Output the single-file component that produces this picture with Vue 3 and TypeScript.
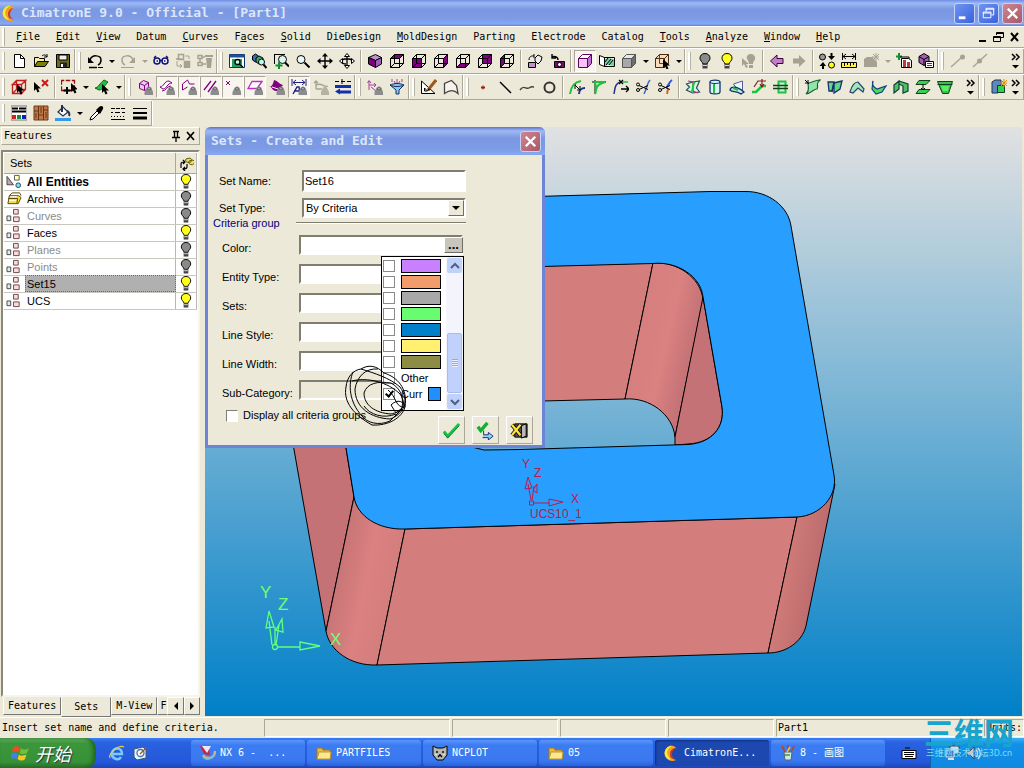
<script setup lang="ts">
import { ref } from 'vue'

type Shape = [d: string, fill: string, stroke?: string, width?: number]

const P = '#800080'
const L = '#c090d0'
const K = '#000'
const N = 'none'
const G = '#a5a294'
const GR = '#20c040'

const front = 'M1.5 5.5h9v9h-9z'
const top = 'M1.5 5.5l4-4h9l-4 4z'
const right = 'M10.5 5.5l4-4v9l-4 4z'
const wire: Shape = [`${front}${top}${right}M5.5 1.5v9h9M5.5 10.5l-4 4`, N, K]
const faceCube = (d: string): Shape[] => [[d, P], wire]
const solidCube = (a: string, b: string, c: string, line: string): Shape[] => [
  [front, a, line], [top, b, line], [right, c, line],
]
const badge: Shape[] = [['M7.500 16v-3l2-4c1-2 4-2 5 0l1.500 4v3z', '#8c8c8c'], ['M10 10l2-1.500 2 1.500-2 1z', '#d0d0d0', '#666']]
const lamp = (c: string): Shape[] => [
  ['M8 .500c-3.500 0-5 2.400-5 4.800 0 2.500 2.500 3.400 3 5.700h4c.5-2.300 3-3.200 3-5.700C13 2.900 11.500.500 8 .500z', c, K],
  ['M5.500 11h5v4.500h-5z', '#444'], ['M6 12.500h4', N, '#ddd'],
]
const glass: Shape[] = [['M10 6.500a4 4 0 1 1-8 0a4 4 0 1 1 8 0z', '#e8f8f8', K], ['M9.500 9.500l5 5', N, K, 2]]
const pointer = (x: number, y: number): Shape => [`M${x} ${y}v9l2-2 1.500 3.500 2-1-1.500-3h3z`, K]
const curve: Shape = ['M1 15C2 7 5 3 12 2', N, GR, 2]
const scissors: Shape[] = [
  ['M1.500 5.500a1.500 1.500 0 1 0 3 0a1.500 1.500 0 1 0-3 0M1.500 11a1.500 1.500 0 1 0 3 0a1.500 1.500 0 1 0-3 0M4 6.500l9 4M4 10.500l9-4', N, K],
]

const icons: Record<string, Shape[]> = {
  new: [['M3.500 1.500h6l4 4v9h-10z', '#fff', K], ['M9.500 1.500v4h4', N, K]],
  open: [['M1.500 13.500v-9h4l1 1h5v3', '#f5f0a0', K], ['M1.500 13.500l3-5h11l-3.500 5z', '#808000', K], ['M9 3c2-2 4-1 5 1m0-3v3h-3', N, K]],
  save: [['M1.500 1.500h13v13h-13z', '#6b6b1a', K], ['M4 2h8v5H4z', '#eee', K], ['M5 9.500h7v5H5z', '#222'], ['M6 11h2v3H6z', '#fff']],
  undo: [['M3 7c2-6 11-5 11 0 0 3-1 4-3 5', N, K, 1.5], ['M1 4v6h6z', K], ['M2 14.500h8', N, K, 1.5], ['M11 14.500h5', N, K, 1]],
  redo: [['M13 7c-2-6-11-5-11 0 0 3 1 4 3 5', N, G, 1.5], ['M15 4v6H9z', G], ['M1 14.500h13', N, G]],
  goggles: [
    ['M1.500 5h13v6H9L8 9.500 7 11H1.500z', '#dfe6ff'],
    ['M1 8a3 3 0 1 0 6 0a3 3 0 1 0-6 0M9 8a3 3 0 1 0 6 0a3 3 0 1 0-6 0M7 7.500h2', '#eef2ff', '#101070', 1.5],
    ['M3.500 8h1.500M11 8h1.500M1 5l2-2M15 5l-2-2', N, '#101070', 1.500],
  ],
  layout: [['M3.500 1.500h5v5h-5zM1 6h5v1M9.500 8.500h5v5h-5z', N, G, 1.5], ['M9 9h6v6H9z', G], ['M2 8v5h5m-2-2l2 2-2 2M10 3h4v3', N, G]],
  tree: [['M1 2.500h4v3H1zM1 9.500h4v3H1zM3 5.500v4M5 4h3M5 11h4', N, G, 1.5], ['M8 2h8v2H8zM9 5h6l-1 10h-4z', G]],
  viewwin: [['M.5 1.500h15v13H.500z', '#fff', '#103070'], ['M.5 1.500h15v3H.500z', '#205090'], ['M3 6h10v8H3z', '#20a060'], ['M11 9a2.500 2.500 0 1 1-5 0a2.500 2.500 0 1 1 5 0M10 11l4 3', '#c8ffe0', K, 1.3]],
  zoomcubes: [['M1.500 3l3-2 3 2v4l-3 2-3-2z', '#3a6ea8', K], ['M5 5l3-2 4 2v4l-4 2-3-2z', '#37b25f', K], ['M13.500 9a3 3 0 1 1-6 0a3 3 0 1 1 6 0', '#c4f5f6', K], ['M12.500 11.500l3 3.500', N, K, 2]],
  zoomrect: [['M1 1.500h11M1.500 1v10', N, K, 1], ['M13.500 6.500a4 4 0 1 1-8 0a4 4 0 1 1 8 0', '#d8f5f0', K], ['M12 9.500l4 4', N, K, 2], ['M6 9v7M2.500 12.500h7', N, '#109030', 2]],
  zoom: glass,
  pan: [['M8 2v12M2 8h12', N, K, 1.4], ['M8 0l3 3.500H5zM8 16l3-3.500H5zM0 8l3.500-3v6zM16 8l-3.500-3v6z', K]],
  rotate: [['M8 2v12M3 8c0-3 10-3 10 0M2 8c1 3 4 3 5 3', N, K, 1.3], ['M8 .500l2.500 3h-5zM8 15.500l2.500-3h-5zM.500 8l3-2.500v5zM15.500 8l-3-2.500v5z', '#fff', K]],
  iso: [['M1.500 4.500l7-3 6 3-6 3z', L, K], ['M1.500 4.500l7 3v7l-7-3.500z', P, K], ['M14.500 4.500l-6 3v7l6-3.500z', '#9a60b8', K]],
  topface: faceCube(top), frontface: faceCube(front), rightface: faceCube(right),
  bottomface: faceCube('M1.500 14.500l4-4h9l-4 4z'), backface: faceCube('M5.500 1.500h9v9h-9z'), leftface: faceCube('M1.500 5.500l4-4v9l-4 4z'),
  restore: [['M1.500 9.500h7v5h-7z', L, K], ['M2 7c0-5 5-4 5-4m0-2v4M8 5l3-3 4 2-1 4-3 3-3-3z', '#eee', K]],
  camera: [['M5.500 8.500h10v6h-10z', P, K], ['M12.500 11.500a2 2 0 1 1-4 0a2 2 0 1 1 4 0', '#fff', K], ['M9 7c0-4-5-4-6-3m0-3v4h4', N, K, 1.4]],
  shaded: solidCube('#f4c4f4', '#fff', '#c070d0', '#600060'),
  section: [['M.500 2.500l5 2v9l-5-2zM5.500 4.500h10v9h-10z', '#fff', K], ['M6 6l3-1 6 1v7l-6-1-3 1z', '#70d0a0'], ['M7 12l5-6M10 12l4-5M6 9l3-4', N, K]],
  graybox: solidCube('#a8a8a8', '#e8e8e8', '#6e6e6e', '#555'),
  pickbox: [[`${front}${top}${right}`, '#f5dcbc', '#4b2a10'], ['M5.500 1.500v9h9', N, '#6b3a10'], pointer(9, 6)],
  lampoff: lamp('#8a8a8a'), lampon: lamp('#ffff20'),
  lamppick: [['M10 1c-3 0-5 2-4 5 1 2 2 3 2 5h4c0-3 3-4 2-7-1-2-2-3-4-3z', G], ['M1 5v8l2-2 2 4 2-1-2-3h3zM8 12h4v3H8z', G]],
  prev: [['M1.500 8L8 2v3.500h6v5H8V14z', '#c080c8', '#400040']],
  next: [['M14.500 8L8 2v3.500H2v5h6V14z', G]],
  swap: [['M6.500 4a3 3 0 1 1-6 0a3 3 0 1 1 6 0', '#999', K], ['M15.500 12a3 3 0 1 1-6 0a3 3 0 1 1 6 0', '#ffff20', K], ['M11.500 0h2v3h2.500L12.500 7 9 3h2.500zM3 16v-3H.500L4 9l3 4H5v3z', K]],
  measure: [['M1.500 0v7M14.500 0v7M2 3.500h12M5 1L2 3.500 5 6M11 1l3 2.500L11 6', N, K], ['M.5 9.500h15v5H.500z', '#ffef50', K], ['M3.500 10v3M6.500 10v2M9.500 10v3M12.500 10v2', N, K]],
  burst: [['M1 6l3-2h6v10H1zM10 5l4 4v5h-4z', G], ['M13 0v8M9 4h7M10 1l6 6M16 1l-6 6', N, G]],
  doc: [['M3 0v7M0 3.500h6', N, '#109030', 2], ['M4 4h9v2', N, K], ['M5.500 5.500h7l3 2v7h-10z', '#fff', K], ['M7 7h3v7H7zM11 9h3v5h-3z', '#b04030']],
  props: [['M1 3.500l5-3 5 3v6l-5 3-5-3z', '#a060b0', K], ['M1 3.500l5 3 5-3M6 6.500v6', N, K], ['M7.500 8.500h8v6h-8z', '#fff', K], ['M9 10.500h5M9 12.500h5', N, '#444']],
  lineend: [['M1 14L11 5', N, G, 1.3], ['M15 4a2.500 2.500 0 1 1-5 0a2.500 2.500 0 1 1 5 0', G]],
  linemid: [['M1 14L15 1', N, G, 1.3], ['M10 8a2.500 2.500 0 1 1-5 0a2.500 2.500 0 1 1 5 0', G]],
  pickcube: [[`${front}${top}${right}M5.500 1.500v9h9M1.500 14.500l4-4`, N, '#c02020', 1.3], pointer(6, 5)],
  deselect: [pointer(1, 3), ['M9 1l6 6M15 1l-6 6', N, '#d01818', 2]],
  boxselect: [['M.500 1.500h13v10H.500z', N, '#901010', 1.3], ['M4 0v3M10 0v3M0 6.500h2M12 5.500h3', N, '#ece9d8', 1.5], ['M6 8v7M2.500 11.500h7', N, K, 2], pointer(10, 4)],
  pickface: [['M1 9c3 0 5-5 9-8l4 2c-3 3-5 8-9 8z', GR, '#106020'], pointer(8, 5)],
  hidecube: [['M2.500 4.500l4-3 5 2v6l-4 2-5-2z', '#f0c8f0', P], ['M2.500 4.500l5 2 4-3M7.500 6.500v5', N, P], ...badge],
  hideface: [['M1 8c4 0 4-6 9-6l3 2c-5 0-5 6-9 6z', '#fff', P], ['M3 12c4 0 5-5 9-5', N, P], ...badge],
  hideopen: [['M1.500 11V5l5-4 2 4 5 0M1.500 11l5-3', N, P], ...badge],
  hidecurve: [['M1 11L8 2M5 13l8-11', N, P, 1.3], ...badge],
  hidepoint: [['M1 2l4 4M5 2L1 6', N, P], ...badge],
  hideplane: [['M5 2.500h10l-5 7H1z', '#fff', '#c030c0', 1.3], ...badge],
  hidesolid: [['M0 8c3 0 4-3 5-7 4 1 5 4 9 5l-4 5c-3 2-6 1-8-3z', P], ['M3 8l6 2', N, '#fff'], ...badge],
  hidedim: [['M1 0v7M15 0v7M2 3.500h12M5 1L2 3.500 5 6M11 1l3 2.500L11 6', N, '#202080'], ['M2 15L6 8h2l1 7M3 12h6', N, '#202080', 1.4], ...badge],
  hideucs: [['M3 10V2M1 4l2-2 2 2M3 10h6M3 6c6-3 8 3 12 1', N, G, 1.3], ['M8 16v-3l2-4c1-2 3-2 4 0l2 4v3z', '#b5b2a4']],
  hidebars: [['M0 2.500h4m2 0h4m2 0h4M7 0v5', N, K], ['M0 6h16v3H0zM0 12.500l5-3v2h11v3H5v1z', '#1030b0']],
  axesfilter: [['M2 11V2M.500 4L2 1.500 4 4M2 6h7M7 4l2 2-2 2M4 8l5 4', N, '#a040a0'], ...badge],
  funnel: [['M3 0v3M8 0v4M13 0v3M5 2l2 3M11 2L9 5', N, '#a040a0'], ['M1 6c4-2 10-2 14 0l-5 5v4H7v-4z', '#8cc8f0', '#103060'], ['M1 6c4 2 10 2 14 0', N, '#103060']],
  sketch: [['M.500 2v12.500H14z', '#fff', K], ['M3.500 9v3h3z', N, K], ['M15 1L7 11', N, '#a05818', 3], ['M8 9l-2 3 3-1z', K]],
  profile: [['M1.500 14.500V4.500l7-3 5 5 1.500 8c-4-4-8-4-13.500 0z', '#f6f4ea', '#444', 1.3]],
  point: [['M6.500 7L9.500 10M9.500 7L6.500 10M8 6.500v4M6 8.500h4', N, '#a02010']],
  line: [['M3 3l11 11', N, K, 1.5]],
  spline: [['M1 11c4-6 6 0 9-2s4-1 5-1', N, '#444', 1.5]],
  circle: [['M13.500 8.500a5 5 0 1 1-10 0a5 5 0 1 1 10 0', N, '#333', 2]],
  offset: [curve, ['M10 15c0-3 2-6 6-6', N, '#203090', 2], ['M6 6l5 5m-4-5h-1v4M11 7v4H8', N, K]],
  corner: [['M1 3h14M4 1v14', N, K, 1], ['M3 3h11M4 3c1 6 2 8 0 12M5 11c1-5 3-6 9-8', N, GR, 2]],
  extend: [['M1 15C2 9 2 4 8 3', N, '#203090', 1.5], ['M6 3h9', N, GR, 1.5], ['M6 1l4 4M10 1L6 5M8 10h8M13 7l3 3-3 3', N, K, 1.3]],
  trim: [['M15 1c-3 3-3 8-6 14', N, '#4060d0', 1.5], ...scissors],
  split: [['M15 1c-3 2-3 5-6 8', N, '#3050e0', 2], ['M11 10l-1 5', N, '#e06020', 2], ...scissors],
  facecut: [['M1.500 5l6-2 7-1-3 7 3 4-7 1-6-3 3-3z', '#d5f8e2', '#205050', 1.2], ['M3 2l5 1v9l5 2', N, '#c020a0', 1.2], ['M10 3c-4 3 0 7-4 10', N, GR, 2]],
  tube: [['M3 3c0-2.500 10-2.500 10 0v10c0 2.500-10 2.500-10 0z', '#d8f4f4', '#103070', 1.3], ['M7 5v9', N, GR, 2], ['M3 3c0 2 10 2 10 0', N, '#103070']],
  wrap: [['M4.500 5l9-3v9l-4 1z', '#e8f6ff', '#506090'], ['M1 11c1-4 7-4 14 2l-3 2C7 11 4 14 1 11z', '#c8f0e8', '#103070', 1.3], ['M4 9l5 2', N, GR, 2]],
  step: [['M1 13h4L11 7h4', N, GR, 2.5], ['M3 8L7 2h8M11 0v7M9 5l2 3 2-3', N, '#802020', 1.2]],
  cross: [['M5.500 2.500h7v11h-7z', '#c8f0d0', GR, 2], ['M0 6.500h15M0 9.500h15', N, '#104020', 1.4]],
  blend: [['M3 4c4 0 6-3 12-3-5 4-1 6-3 9-4 0-5 4-11 5 4-3 2-7 2-11z', '#90e8a8', '#206040', 1.2], ['M0 1l4 4M3 1v3H0', N, K]],
  sweep: [['M1 3h6l-2 9H2zM7 4l8-2-2 8-6 4z', '#60d880', '#183070', 1.3], ['M7 4l-2 9', N, '#183070', 1.3]],
  arch: [['M1 13C3 6 5 3 9 3l6 7-1 3-5-4-5 5z', '#a0e8b8', '#304070', 1.2]],
  fold: [['M2 2c-2 5 2 7 4 8l9-3-4 6-6 2-4-5z', '#50d860', '#104080', 1.2]],
  shell: [['M1 6l5-4v8l-5 4zM6 2l9 3v7l-5 2V7L6 5z', '#50c060', '#104040', 1.2]],
  extrude: [['M4 1.500h11l-4 4H1z', '#38d050', '#104020'], ['M4 10.500h11l-4 4H1z', '#38d050', '#104020'], ['M8 5v6M6 9l2 2 2-2', N, K]],
  draft: [['M.5 2.500h15l-4 12h-6z', '#38c050', '#104020'], ['M.5 5.500h15', N, '#104020'], ['M4 7h8l-1 5H6z', '#58ef60']],
  newsolid: [['M1 3l3-2h6v10l-3 3H1z', '#6088c0', '#203050'], ['M6.500 6.500h7v7h-7z', '#30d050', '#104020'], ['M13 0v8M9 4h7M10 1l6 6M16 1l-6 6', N, '#e09010']],
  colors: [['M0 1h16v14H0z', '#fff', '#777'], ['M1 3.500h6M8 3.500h7M1 6.500h14', N, K, 2], ['M1 10h4v4H1z', '#d02020'], ['M6 10h4v4H6z', '#109030'], ['M11 10h4v4h-4z', '#1020c0']],
  wood: [['M1 1h14v14H1z', '#c07848', '#6a3a1a'], ['M5.500 1v14M10.500 1v14M1 6h4M6 10h4M11 5h4M3 8v5M8 2v6M13 7v6', N, '#6a3416']],
  bucket: [['M3 7l5-5 5 5-5 4z', '#fff', '#203050', 1.2], ['M7 0v7M12 6c2 1 3 3 2 5', N, '#203050', 2], ['M0 13h16v3H0z', '#3399e8']],
  dropper: [['M2 15l1-3 6-6 2 2-6 6z', '#fff', K], ['M8 5l4 4 3-5c1-3-2-4-4-2z', K]],
  dashes: [['M1 3.500h4m1 0h4m1 0h4M1 7.500h2m2 0h5m2 0h3M1 11.500h1m2 0h1m2 0h1m2 0h1m2 0h1M1 14.500h14', N, K]],
  widths: [['M1 3.500h14', N, K, 1], ['M1 8h14', N, K, 2], ['M1 13h14', N, K, 3]],
  all: [['M.5 11.500V2.500l7 9z', '#c8a0a8', '#444'], ['M8.500 1.500h5v5h-5z', '#ffffc0', '#555'], ['M15 12a2.500 2.500 0 1 1-5 0a2.500 2.500 0 1 1 5 0', '#80e0e0', '#246']],
  archive: [['M1.500 13.500L3 5h10l2.500 2-3 6.500z', '#f5e040', '#554400'], ['M3 5l3-3h8l1.500 3M2 8h10l-1 5', N, '#554400'], ['M4 6h7M3 10h7', N, '#fff']],
  set: [['M.5 8.500h4v5h-4z', '#e8e8e8', '#444'], ['M7.500 1.500h5v5h-5zM7.500 9.500h6v5h-6z', '#ffd8dc', '#664448']],
  logo: [['M10 1C3 0-1 6 1 11c2 5 8 6 11 4-4-1-6-3-6-6s2-5 6-6z', '#f5a020'], ['M9 1C4 2 2 7 4 11l3 4C2 14 0 10 1 6c1-3 4-6 8-5z', '#f4ee38'], ['M11 3C6 4 5 9 7 13l5 2c-4-2-6-7-1-12z', '#d83818']],
  ie: [['M3 9h10c0-7-9-7-10-1-1 6 7 8 9 4', N, '#7cc8ff', 2.5], ['M1 13C-1 9 10-1 15 2', N, '#e8d050', 1.2]],
  desk: [['M2 4l9-2 3 3v8l-9 2-3-3z', '#e8f2ff', '#456'], ['M12 8a3.500 3.500 0 1 1-7 0a3.500 3.500 0 1 1 7 0', '#fff', '#3878b8', 1.3], ['M8 9l6-6', N, '#a06020', 1.5]],
  nx: [['M0 1l8 1 2 8-6-1z', '#d02040'], ['M2 1l5 7 4-7z', '#e8e8ff'], ['M3 10c3 5 12 4 12-4', N, '#d8b070', 2.5], ['M3 12c3 4 10 2 11-3', N, '#68c0e0', 1.5]],
  folder: [['M1 3h5l1 2h7v9H1z', '#e8b840', '#a07818'], ['M3 7h12l-1 7H1z', '#ffe890', '#c09830']],
  cat: [['M1 1l4 2h6l4-2v9l-4 5H5l-4-5z', '#b8b8b0', K], ['M5 6v2M11 6v2M6 12l2-2 2 2M8 9v2', N, K, 1.4], ['M3 9l2 1M13 9l-2 1', N, '#eee']],
  paint: [['M4 7h8l-1 8H5z', '#d8e8d8', '#567'], ['M5 7L2 1M8 7V0M11 7l3-6', N, '#c04020', 1.6], ['M7 7l3-5', N, '#e8c020', 1.6], ['M5 10h5', N, '#30a040', 1.5]],
  keyboard: [['M1 5.500h14v8H1z', '#fff', K], ['M3 7.500h10M3 9.500h10', N, K, 1], ['M4 11.500h8M4 3h5', N, K]],
  monitor: [['M5 1h9v8H5z', '#c8e0f8', '#345'], ['M1 5h8v7H1z', '#3070c8', '#dde'], ['M3 14h6', N, '#dde', 2]],
  sound: [['M2 6h3l4-4v12l-4-4H2z', '#c8c8d0', '#445'], ['M11 5c2 2 2 5 0 7M13 3c3 3 3 8 0 11', N, '#dde', 1.3]],
}

interface Tool { icon: string; drop?: boolean; on?: boolean }
const parse = (row: string[]): Tool[][] =>
  row.map(group => group.split(' ').map(word => ({
    icon: word.replace(/[+*]/g, ''), drop: word.includes('+'), on: word.includes('*'),
  })))

const toolRows = [
  parse([
    'new open save',
    'undo+ redo+ goggles layout tree',
    'viewwin zoomcubes zoomrect zoom pan rotate | iso topface frontface rightface bottomface backface leftface | restore camera | shaded* section graybox+ pickbox+',
    'lampoff lampon lamppick | prev next | swap measure burst+ doc props',
    'lineend linemid more',
  ]),
  parse([
    'pickcube deselect | boxselect+ pickface+',
    'hidecube hideface* hideopen* hidecurve* hidepoint* hideplane* hidesolid hidedim* hideucs hidebars',
    'axesfilter funnel',
    'sketch profile',
    'point line spline circle | offset corner extend trim split | facecut tube wrap step cross',
    'blend sweep arch fold shell extrude draft more',
    'newsolid more',
  ]),
  parse(['colors wood bucket+ dropper dashes widths']),
]

const menus: [string, string, string][] = [
  ['', 'F', 'ile'], ['', 'E', 'dit'], ['', 'V', 'iew'], ['Datum', '', ''], ['', 'C', 'urves'], ['F', 'a', 'ces'],
  ['', 'S', 'olid'], ['DieDesign', '', ''], ['', 'M', 'oldDesign'], ['Parting', '', ''], ['Electrode', '', ''],
  ['Catalog', '', ''], ['', 'T', 'ools'], ['', 'A', 'nalyze'], ['', 'W', 'indow'], ['', 'H', 'elp'],
]

const sets = [
  { name: 'All Entities', icon: 'all', lit: true, look: 'strong' },
  { name: 'Archive', icon: 'archive', lit: false, look: '' },
  { name: 'Curves', icon: 'set', lit: false, look: 'dim' },
  { name: 'Faces', icon: 'set', lit: true, look: '' },
  { name: 'Planes', icon: 'set', lit: false, look: 'dim' },
  { name: 'Points', icon: 'set', lit: false, look: 'dim' },
  { name: 'Set15', icon: 'set', lit: true, look: 'chosen' },
  { name: 'UCS', icon: 'set', lit: true, look: '' },
]

const setName = ref('Set16')
const criteria = ['Color', 'Entity Type', 'Sets', 'Line Style', 'Line Width', 'Sub-Category']
const swatches = ['#c880ff', '#f09c6c', '#a8a8a8', '#68fc70', '#0080c8', '#fff070', '#8c8c44']

const tasks = [
  { icon: 'nx', text: 'NX 6 -  ...' },
  { icon: 'folder', text: 'PARTFILES' },
  { icon: 'cat', text: 'NCPLOT' },
  { icon: 'folder', text: '05' },
  { icon: 'logo', text: 'CimatronE...', active: true },
  { icon: 'paint', text: '8 - 画图' },
]
</script>

<template>
  <div class="screen">
    <header class="titlebar">
      <svg class="ico" viewBox="0 0 16 16"><path v-for="(s, i) in icons.logo" :key="i" :d="s[0]" :fill="s[1]" /></svg>
      <h1>CimatronE 9.0 - Official - [Part1]</h1>
      <button class="win" aria-label="Minimize"><svg viewBox="0 0 20 20"><path d="M4 13h7v3H4z" fill="#fff" /></svg></button>
      <button class="win" aria-label="Restore"><svg viewBox="0 0 20 20"><path d="M7.500 8V4.500h8v7H13M4.500 8.500h8v6h-8zM4 9.500h9M7 5.500h9" fill="none" stroke="#fff" /></svg></button>
      <button class="win shut" aria-label="Close"><svg viewBox="0 0 20 20"><path d="M5 5l10 10M15 5L5 15" stroke="#fff" stroke-width="2.500" /></svg></button>
    </header>

    <nav class="menubar">
      <i class="grip"></i>
      <button v-for="m in menus" :key="m.join('')">{{ m[0] }}<u>{{ m[1] }}</u>{{ m[2] }}</button>
      <svg class="mdi" viewBox="0 0 42 12" aria-hidden="true">
        <path d="M1 9h7v2H1z" /><path d="M18.500 4V1.500h7v5H23M15.500 5.500h7v5h-7zM15 6.500h8M18 2.500h8" fill="none" stroke="#000" />
        <path d="M33 2l7 8M40 2l-7 8" stroke="#000" stroke-width="2" />
      </svg>
    </nav>

    <div v-for="(row, r) in toolRows" :key="r" class="toolrow" :class="{ short: r === 2 }">
      <div v-for="(group, g) in row" :key="g" class="group">
        <i class="grip"></i>
        <template v-for="(t, k) in group" :key="k">
          <i v-if="t.icon === '|'" class="sep"></i>
          <button v-else-if="t.icon === 'more'" class="more" aria-label="More buttons">
            <svg viewBox="0 0 12 20"><path d="M2 3l3 3-3 3M6 3l3 3-3 3" fill="none" stroke="#000" stroke-width="1.500" /><path d="M2 14h7l-3.500 3.500z" /></svg>
          </button>
          <template v-else>
            <button class="tool" :class="{ on: t.on }" :aria-label="t.icon">
              <svg class="ico" viewBox="0 0 16 16">
                <path v-for="(s, i) in icons[t.icon]" :key="i" :d="s[0]" :fill="s[1]" :stroke="s[2]" :stroke-width="s[3]" />
              </svg>
            </button>
            <button v-if="t.drop" class="drop" :class="{ off: t.icon === 'redo' || t.icon === 'burst' }" :aria-label="t.icon + ' options'"></button>
          </template>
        </template>
      </div>
    </div>

    <main class="work">
      <aside class="side">
        <div class="sidehead">
          <span>Features</span>
          <svg viewBox="0 0 26 12" aria-hidden="true"><path d="M2 1.500h6M3.500 1v6M6.500 1v6M1 7.500h8M5 8v4" fill="none" stroke="#000" stroke-width="1.300" /><path d="M16 2l7 8M23 2l-7 8" stroke="#000" stroke-width="1.700" /></svg>
        </div>
        <div class="sidebody">
          <table>
            <colgroup><col class="ckind"><col><col class="cvis"></colgroup>
            <thead>
              <tr>
                <th colspan="2">Sets</th>
                <th class="vis">
                  <svg class="ico" viewBox="0 0 16 16"><path d="M3 13V9c0-2 2-2 4-2M5 5l2 2-2 2M9 9v3c0 2-2 2-4 2M7 12l-2 2 2 2" fill="none" stroke="#000" stroke-width="1.200" /><path d="M12 3a3 2.500 0 1 1-4 1zM15 5a3 2.500 0 1 1-4 1z" fill="#e8e060" stroke="#665c10" /></svg>
                </th>
              </tr>
            </thead>
            <tbody>
              <tr v-for="s in sets" :key="s.name">
                <td class="kind"><svg class="ico" viewBox="0 0 16 16"><path v-for="(p, i) in icons[s.icon]" :key="i" :d="p[0]" :fill="p[1]" :stroke="p[2]" /></svg></td>
                <td class="name" :class="s.look">{{ s.name }}</td>
                <td class="vis"><svg class="ico" viewBox="0 0 16 16"><path v-for="(p, i) in icons[s.lit ? 'lampon' : 'lampoff']" :key="i" :d="p[0]" :fill="p[1]" :stroke="p[2]" /></svg></td>
              </tr>
            </tbody>
          </table>
        </div>
        <div class="tabs">
          <button>Features</button>
          <button class="current">Sets</button>
          <button>M-View</button>
          <button class="cut">F</button>
          <button class="arrow" aria-label="Scroll left"><svg viewBox="0 0 8 8"><path d="M6 0v8L2 4z" /></svg></button>
          <button class="arrow" aria-label="Scroll right"><svg viewBox="0 0 8 8"><path d="M2 0v8l4-4z" /></svg></button>
        </div>
      </aside>

      <section class="view">
        <svg class="scene" viewBox="205 127 817 590" preserveAspectRatio="xMinYMin slice">
          <defs>
            <linearGradient id="roundLeft" gradientUnits="userSpaceOnUse" x1="338" y1="570" x2="396" y2="582">
              <stop offset="0" stop-color="#c87477" /><stop offset="0.500" stop-color="#db8181" /><stop offset="1" stop-color="#d37e7c" />
            </linearGradient>
            <linearGradient id="roundRight" gradientUnits="userSpaceOnUse" x1="780" y1="590" x2="822" y2="598">
              <stop offset="0" stop-color="#d07b79" /><stop offset="1" stop-color="#b8686a" />
            </linearGradient>
            <linearGradient id="roundInner" gradientUnits="userSpaceOnUse" x1="640" y1="340" x2="692" y2="352">
              <stop offset="0" stop-color="#d67f7e" /><stop offset="0.500" stop-color="#da8181" /><stop offset="1" stop-color="#c47276" />
            </linearGradient>
          </defs>
          <g stroke="#000" stroke-width="1">
            <path d="M280 370L346 448L354 497L326 631Z" fill="#c47276" />
            <path d="M354 490L354 497L326 631C329 650 350 666 377 665L405 529Z" fill="url(#roundLeft)" />
            <path d="M405 529L797 517L768 653L377 665Z" fill="#d37e7c" />
            <path d="M797 517L835 484L806 626C802 642 786 653 768 653Z" fill="url(#roundRight)" />
            <path d="M500 267L653 263L625 399L500 402Z" fill="#d37e7c" />
            <path d="M653 263C676 261 701 277 703 300L675 437C673 415 650 397 625 399Z" fill="url(#roundInner)" />
            <path d="M703 297L722 407C725 427 712 443 688 444L675 445V437Z" fill="#c47276" />
            <path fill="#289fff" fill-rule="evenodd" d="M310 203L710 191.500L745 191.500C768 191 788 206 791 226L834 475C838 496 820 516 797 517L405 529C378 530 357 516 354 497L346 448ZM450 269L653 263.500C678 261 701 277 703 297L722 407C725 427 712 443 688 444.500L520 449.500L484 450L460 444Z" />
          </g>
          <g fill="none" stroke="#60ff80" stroke-width="1.300">
            <path d="M278 647h22M300 642l20 4-20 4zM272 645l-3-24M276 645l3-20M266 628l3-17 5 16zM276 630l6-11 1 13zM275 627v18" />
            <circle cx="275" cy="647" r="2.500" />
          </g>
          <g class="bigaxes" fill="#70ff70"><text x="260" y="598">Y</text><text x="278" y="610">Z</text><text x="330" y="645">X</text></g>
          <g fill="none" stroke="#c01848" stroke-width="1">
            <path d="M533 503h16M549 499l14 3-14 4zM531 500l-3-16M532 500l2-14M525 489l3-12 4 11zM533 490l4-6v9z" />
            <path d="M529.500 501h4v4h-4z" />
          </g>
          <g class="smallaxes" fill="#c01848"><text x="522" y="468">Y</text><text x="534" y="477">Z</text><text x="571" y="503">X</text><text x="530" y="518">UCS10_1</text></g>
        </svg>
      </section>

      <form class="dialog" @submit.prevent>
        <div class="dlgtitle">
          <h2>Sets - Create and Edit</h2>
          <button type="button" class="win shut" aria-label="Close"><svg viewBox="0 0 20 20"><path d="M5 5l10 10M15 5L5 15" stroke="#fff" stroke-width="2.500" /></svg></button>
        </div>
        <div class="dlgbody">
          <div class="line">
            <label for="setname">Set Name:</label>
            <input id="setname" v-model="setName" class="box">
          </div>
          <div class="line">
            <label for="settype">Set Type:</label>
            <span class="combo">
              <select id="settype" class="box"><option>By Criteria</option></select>
              <i class="knob"></i>
            </span>
          </div>
          <div class="legend"><span>Criteria group</span><hr></div>
          <div class="criteria">
            <div v-for="(c, i) in criteria" :key="c" class="crit">
              <label :for="'c' + i">{{ c }}:</label>
              <span class="combo">
                <input :id="'c' + i" class="box" :class="{ faded: i === 5 }">
                <button v-if="i === 0" type="button" class="dots">...</button>
              </span>
            </div>
            <div class="popup">
              <ul>
                <li v-for="(c, i) in swatches" :key="c"><input type="checkbox" :aria-label="'Color ' + (i + 1)"><i class="swatch" :style="{ background: c }"></i></li>
                <li><input id="other" type="checkbox"><label for="other">Other</label></li>
                <li><input id="curr" type="checkbox" checked><label for="curr">Curr</label><i class="swatch own"></i></li>
              </ul>
              <div class="scroll">
                <button type="button" aria-label="Scroll up"><svg viewBox="0 0 10 8"><path d="M1 6l4-4 4 4" fill="none" stroke="#4d6185" stroke-width="2" /></svg></button>
                <i class="thumb"></i>
                <button type="button" aria-label="Scroll down"><svg viewBox="0 0 10 8"><path d="M1 2l4 4 4-4" fill="none" stroke="#4d6185" stroke-width="2" /></svg></button>
              </div>
            </div>
          </div>
          <label class="showall"><input type="checkbox">Display all criteria groups</label>
          <div class="actions">
            <button type="submit" aria-label="OK"><svg viewBox="0 0 20 20"><path d="M2 11l4 5L18 3" fill="none" stroke="#10c840" stroke-width="3" /><path d="M2 13l4 5L18 5" fill="none" stroke="#107830" /></svg></button>
            <button type="button" aria-label="Apply"><svg viewBox="0 0 20 20"><path d="M2 6l3 4 7-8" fill="none" stroke="#10b030" stroke-width="3.500" /><path d="M8 10v4.500h5v-2.500l5 4-5 4v-2.500H7" fill="#9ad0f0" stroke="#103080" /></svg></button>
            <button type="button" aria-label="Exit"><svg viewBox="0 0 20 20"><path d="M5 3h13v14H5z" fill="#555" stroke="#000" /><path d="M12 5l5-2v13l-5 2z" fill="#b8b8b8" stroke="#000" /><path d="M2 4l9 11M11 4L2 15" stroke="#000" stroke-width="4" /><path d="M2 4l9 11M11 4L2 15" stroke="#ffe030" stroke-width="2.500" /></svg></button>
          </div>
        </div>
        <svg class="scrawl" viewBox="340 360 70 70" fill="none" stroke="#000" stroke-width="1" aria-hidden="true">
          <path d="M361 369C369 364 377 366 384 373C397 377 408 388 405 407C402 418 388 426 372 425C354 415 343 402 346 387C347 377 353 370 361 369C374 373 390 378 400 387C410 401 404 414 390 419C371 418 355 408 355 389C357 377 365 368 378 369M352 381C367 377 388 382 400 394C408 406 401 412 391 414C375 413 364 405 364 393C367 383 378 381 391 383M364 406C370 415 384 419 396 414M391 383C400 388 404 396 402 408L396 413L391 405C398 398 404 402 405 407C395 408 397 397 388 390M353 372C348 384 349 402 362 416C367 423 379 426 390 421L402 409" />
        </svg>
      </form>
    </main>

    <footer class="status">
      <span class="msg">Insert set name and define criteria.</span>
      <span class="cell wide"></span><span class="cell"></span><span class="cell"></span><span class="cell"></span>
      <span class="cell part">Part1</span><span class="cell units">Units:</span>
    </footer>

    <div class="taskbar">
      <button class="start">
        <svg viewBox="0 0 20 18"><path d="M2 4c3-3 5-2 7 0L7.500 8.500C5 7 3 7 .500 8.500z" fill="#e85020" /><path d="M10 4c2 2 5 2 8 0l-2 5c-2 1-5 2-7.500 0z" fill="#70c030" /><path d="M.500 10c2-2 5-1 6.500 0L5.500 15c-2-1-4-1-6 0z" fill="#4080f0" /><path d="M8 10.500c2 2 5 1 7.500 0L14 15c-2 2-5 2-7.500 0z" fill="#f8c820" /></svg>
        <span>开始</span>
      </button>
      <div class="quick">
        <button v-for="q in ['ie', 'desk']" :key="q" :aria-label="q"><svg class="ico" viewBox="0 0 16 16"><path v-for="(s, i) in icons[q]" :key="i" :d="s[0]" :fill="s[1]" :stroke="s[2]" :stroke-width="s[3]" /></svg></button>
      </div>
      <button v-for="t in tasks" :key="t.text" class="task" :class="{ active: t.active }">
        <svg class="ico" viewBox="0 0 16 16"><path v-for="(s, i) in icons[t.icon]" :key="i" :d="s[0]" :fill="s[1]" :stroke="s[2]" :stroke-width="s[3]" /></svg>
        <span>{{ t.text }}</span>
      </button>
      <div class="lang"><svg class="ico" viewBox="0 0 16 16"><path v-for="(s, i) in icons.keyboard" :key="i" :d="s[0]" :fill="s[1]" :stroke="s[2]" /></svg></div>
      <div class="tray">
        <svg v-for="q in ['monitor', 'sound']" :key="q" class="ico" viewBox="0 0 16 16"><path v-for="(s, i) in icons[q]" :key="i" :d="s[0]" :fill="s[1]" :stroke="s[2]" :stroke-width="s[3]" /></svg>
      </div>
    </div>

    <div class="mark"><b>三维网</b><span>三维网技术论坛3D.cn</span></div>
  </div>
</template>

<style>
html, body { margin: 0; height: 100%; }
#app { height: 100%; }
</style>

<style scoped>
* { box-sizing: border-box; }
.screen {
  --face: #ece9d8;
  --shade: #aca899;
  --mono: "DejaVu Sans Mono", "Noto Sans CJK SC", monospace;
  --sans: "Liberation Sans", sans-serif;
  position: relative; display: flex; flex-direction: column; min-height: 100vh; overflow: hidden;
  background: var(--face); color: #000; font: 10px/14px var(--mono);
}
button { font: inherit; color: inherit; margin: 0; padding: 0; border: 0; background: none; }
button, svg, i { flex: none; }
.ico { display: block; width: 16px; height: 16px; }

.titlebar {
  display: flex; align-items: center; gap: 3px; height: 26px; padding: 0 1px 0 2px;
  background: linear-gradient(#6f8fe8, #9db9f3 12%, #7b98e2 35%, #7d9ae4 70%, #86a8f4 92%, #6a80cc);
}
h1, h2 { flex: 1; margin: 0; font: bold 13px/18px var(--mono); color: #dce6fb; white-space: nowrap; }
.win { width: 21px; height: 21px; border: 1px solid #c4d2f8; border-radius: 3px; background: linear-gradient(135deg, #6f94f0, #3a62dc); }
.win + .win { margin-left: 0; }
.win svg { display: block; width: 19px; height: 19px; }
.shut { background: linear-gradient(135deg, #cf8590, #ab5768); }

.menubar { display: flex; align-items: center; height: 22px; border-top: 1px solid #fff; border-bottom: 1px solid var(--shade); }
.menubar button { margin-right: 16px; }
.mdi { width: 42px; height: 12px; margin: 0 4px 0 auto; }
.grip { width: 8px; height: 18px; background: linear-gradient(90deg, transparent 2px, #fff 2px, #fff 4px, #b5b2a2 4px, #b5b2a2 5px, transparent 5px); }
.menubar .grip { margin-right: 8px; }

.toolrow { display: flex; height: 26px; border-top: 1px solid #fff; border-bottom: 1px solid var(--shade); }
.group { display: flex; align-items: center; border-right: 1px solid var(--shade); box-shadow: 1px 0 #fff; margin-right: 1px; }
.group:last-child { margin-right: 0; }
.toolrow:nth-of-type(1) .group:last-child { flex: 1; }
.group:has(.more):not(:last-child) { flex: 1; }
.short { align-self: flex-start; }
.tool { display: flex; align-items: center; justify-content: center; width: 22px; height: 22px; }
.tool.on { border: 1px solid; border-color: #aca899 #fff #fff #aca899; background: #f7f5ee; }
.drop { width: 11px; height: 22px; }
.drop::after { content: ""; display: block; width: 0; margin: 0 auto; border: 3px solid transparent; border-top-color: #000; border-bottom: 0; }
.drop.off::after { border-top-color: #a5a294; }
.sep { width: 2px; height: 22px; margin: 0 2px; border-left: 1px solid var(--shade); border-right: 1px solid #fff; }
.more { width: 13px; margin-left: auto; }
.more svg { display: block; width: 12px; height: 20px; }

.work { position: relative; display: flex; flex: 1; min-height: 590px; }
.side { display: flex; flex-direction: column; width: 205px; padding: 1px 5px 0 1px; flex: none; }
.sidehead { display: flex; align-items: center; justify-content: space-between; height: 18px; padding: 0 2px; border: 1px solid; border-color: #fff var(--shade) var(--shade) #fff; }
.sidehead svg { width: 26px; height: 12px; }
.sidebody { flex: 1; margin-top: 5px; padding: 1px; border: 2px solid; border-color: #8a887a #f6f4ec #f6f4ec #8a887a; background: #fff; }
table { width: 100%; border-collapse: collapse; font: 11px/14px var(--sans); table-layout: fixed; }
th { height: 20px; padding: 0 0 0 6px; text-align: left; font-weight: normal; background: var(--face); border-right: 1px solid var(--shade); border-bottom: 1px solid var(--shade); }
td { height: 17px; padding: 0; border-bottom: 1px solid #c8c8c0; }
th.vis, td.vis { padding: 0 0 0 2px; border-left: 1px solid #b8b8b0; border-right: 1px solid #b8b8b0; }
td .ico { height: 15px; }
.ckind { width: 21px; }
.cvis { width: 21px; }
.kind { padding-left: 2px; }
.name { padding-left: 2px; }
.strong { font-weight: bold; font-size: 12px; }
.dim { color: #8a8a8a; }
.chosen { background: #b0b0b0; outline: 1px dotted #666; outline-offset: -1px; }
.tabs { display: flex; align-items: flex-start; height: 20px; padding-left: 2px; }
.tabs button { height: 18px; padding: 0 4px; border: 1px solid; border-color: transparent #777 #777 #fff; }
.tabs .current { height: 20px; padding: 0 12px; }
.tabs .cut { width: 10px; padding: 0 0 0 2px; border-right: 0; text-align: left; }
.tabs .arrow { flex: 1; padding: 0; border-color: #fff #777 #777 #fff; }
.arrow svg { display: block; width: 8px; height: 8px; margin: 0 auto; }

.view { position: relative; flex: 1; margin: 1px 2px 1px 0; background: linear-gradient(#e1e1e1, #0080c8); }
.scene { position: absolute; width: 100%; height: 100%; }
.bigaxes { font: 17px "Liberation Sans", sans-serif; }
.smallaxes { font: 12px "Liberation Sans", sans-serif; }

.dialog { position: absolute; left: 205px; top: 1px; width: 340px; border: 3px solid #6c84d8; border-top: 0; border-radius: 6px 6px 0 0; background: var(--face); font: 11px/15px var(--sans); }
.dlgtitle { display: flex; align-items: center; height: 28px; margin: 0 -3px; padding: 0 4px 0 6px; border-radius: 6px 6px 0 0; background: linear-gradient(#5f74cc, #9db9f3 14%, #7b98e2 40%, #7d9ae4 75%, #86a8f4); }
.dlgbody { position: relative; height: 290px; padding: 15px 11px 0; }
.line { display: flex; align-items: center; height: 22px; margin-bottom: 5px; }
.line label { width: 83px; }
.box { width: 100%; height: 20px; margin: 0; padding: 0 2px; border: 2px solid; border-color: #807e70 #fff #fff #807e70; border-radius: 0; background: #fff; font: inherit; color: #000; appearance: none; outline: 0; }
.line .box, .line .combo { width: 164px; }
#setname { height: 22px; padding-left: 1px; }
.combo { position: relative; display: block; }
.knob, .dots { position: absolute; right: 2px; top: 2px; width: 16px; height: 16px; border: 1px solid; border-color: #fff #706e60 #706e60 #fff; background: var(--face); }
.knob::after { content: ""; position: absolute; left: 3px; top: 5px; border: 4px solid transparent; border-top-color: #000; border-bottom: 0; }
.dots { right: 0; width: 19px; background: #c8c6bc; font-weight: bold; font-size: 13px; line-height: 10px; }
.legend { display: flex; align-items: center; height: 14px; margin: -8px 0 5px -6px; color: #000080; }
.legend span { width: 83px; line-height: 12px; }
.legend hr { flex: none; width: 170px; margin: 0; border: 0; border-top: 1px solid #807e70; border-bottom: 1px solid #fff; }
.criteria { position: relative; display: grid; grid-auto-rows: 20px; row-gap: 9px; margin-left: 3px; }
.crit { display: flex; align-items: center; }
.crit label { width: 77px; padding-top: 6px; }
.crit .combo { width: 164px; }
.box.faded { background: var(--face); }
.popup { position: absolute; left: 159px; top: 21px; display: flex; width: 83px; height: 155px; border: 1px solid #000; background: #fff; }
ul { flex: 1; margin: 0; padding: 1px 0 0 1px; list-style: none; }
li { display: flex; align-items: center; height: 16px; gap: 6px; }
input[type="checkbox"] { position: relative; flex: none; width: 12px; height: 12px; margin: 0; border: 1px solid #8a8a8a; background: #fff; appearance: none; }
input:checked::after { content: ""; position: absolute; left: 3px; top: 0; width: 3px; height: 6px; border: solid #000; border-width: 0 2px 2px 0; transform: rotate(40deg); }
.swatch { width: 40px; height: 14px; border: 1px solid #000; }
.own { width: 13px; background: #2090ff; }
.scroll { display: flex; flex-direction: column; width: 17px; padding: 1px; background: #f4f4fc; }
.scroll button { height: 15px; border-radius: 2px; background: #c0d2fc; }
.scroll svg { display: block; width: 10px; height: 8px; margin: 0 auto; }
.thumb { height: 60px; margin: auto 0 1px; border: 1px solid #a8bcf0; border-radius: 2px; background: repeating-linear-gradient(#8ea8e8 0 1px, #eef4ff 1px 2px) center / 6px 8px no-repeat, #c0d2fc; }
.showall { display: flex; align-items: center; gap: 5px; margin: 8px 0 0 7px; }
.showall input { border: 1px solid; border-color: #807e70 #fff #fff #807e70; }
.actions { position: absolute; right: 9px; bottom: 1px; display: flex; gap: 7px; }
.actions button { width: 27px; height: 28px; border: 1px solid; border-color: #fff #aca899 #aca899 #fff; }
.actions svg { display: block; width: 19px; height: 19px; margin: 0 auto; }
.scrawl { position: absolute; left: 132px; top: 233px; width: 70px; height: 70px; pointer-events: none; }

.status { display: flex; align-items: center; height: 21px; padding-left: 2px; border-top: 1px solid #fff; }
.msg { flex: 1; white-space: nowrap; }
.cell { width: 106px; height: 18px; margin-right: 2px; padding: 1px 0 0 1px; border: 1px solid; border-color: var(--shade) #fff #fff var(--shade); }
.wide { width: 186px; }
.part { width: 206px; }
.units { width: 40px; margin: 0; }

.taskbar { display: flex; height: 30px; color: #fff; background: linear-gradient(#3a80f4, #2a62e0 14%, #2458da 80%, #1c46b4); }
.start { display: flex; align-items: center; gap: 4px; width: 96px; padding-left: 11px; border-radius: 0 10px 10px 0; background: linear-gradient(#68b868, #3c963c 18%, #379237 80%, #2a702a); box-shadow: inset -3px 0 4px #1f661f; font: italic 18px/26px "Noto Sans CJK SC", sans-serif; text-shadow: 1px 1px 1px #234; }
.start svg { width: 20px; height: 18px; }
.quick { display: flex; align-items: center; gap: 7px; width: 95px; padding-left: 13px; flex: none; }
.task { display: flex; align-items: center; gap: 4px; flex: 0 1 114px; min-width: 0; height: 26px; margin: 2px 2px 0 0; padding-left: 9px; border-radius: 3px; background: linear-gradient(#5c96fa, #3c7cf2 20%, #3a78f0 80%, #2a62d8); white-space: pre; }
.task.active { background: #1c48b0; box-shadow: inset 1px 1px 2px #10307c; }
.lang { display: flex; align-items: center; justify-content: center; flex: 1; }
.tray { display: flex; align-items: center; gap: 4px; width: 94px; padding-left: 14px; background: linear-gradient(#38b0f8, #1290e8 20%, #1088e0); border-left: 1px solid #1060b0; }

.mark { position: absolute; right: 10px; bottom: 8px; display: flex; flex-direction: column; align-items: center; color: #18a4cc; font-family: "Noto Sans CJK SC", sans-serif; white-space: nowrap; pointer-events: none; }
.mark b { font-size: 30px; line-height: 30px; font-weight: bold; }
.mark span { font-size: 9px; line-height: 14px; color: #7cdcf4; }
</style>
